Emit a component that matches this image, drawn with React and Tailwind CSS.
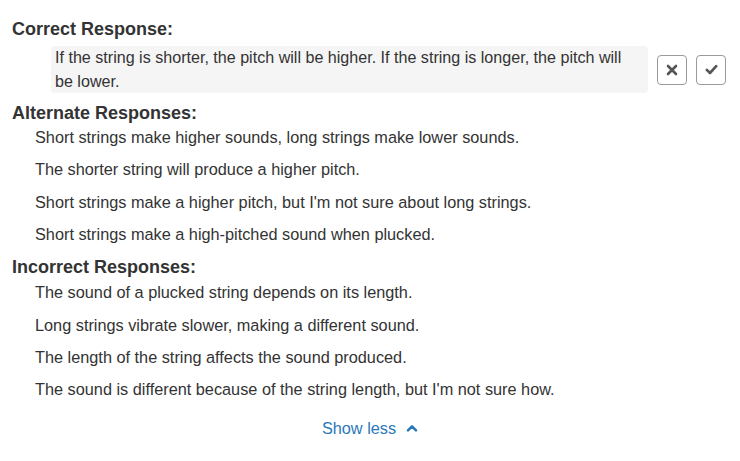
import React from 'react'

const alternates = [
  'Short strings make higher sounds, long strings make lower sounds.',
  'The shorter string will produce a higher pitch.',
  "Short strings make a higher pitch, but I'm not sure about long strings.",
  'Short strings make a high-pitched sound when plucked.',
]

const incorrect = [
  'The sound of a plucked string depends on its length.',
  'Long strings vibrate slower, making a different sound.',
  'The length of the string affects the sound produced.',
  "The sound is different because of the string length, but I'm not sure how.",
]

function Heading({ children }) {
  return <h3 className="text-[18px] font-bold leading-[20px] text-[#333]">{children}</h3>
}

function ResponseList({ items, className = '' }) {
  return (
    <ul className={`pl-[23px] ${className}`}>
      {items.map((t) => (
        <li key={t} className="py-[4px] text-[16.3px] leading-[24.33px] text-[#333]">
          {t}
        </li>
      ))}
    </ul>
  )
}

export default function App() {
  return (
    <div
      className="min-h-[461px] w-[740px] bg-white px-[12px] pt-[19px]"
      style={{ fontFamily: '"Liberation Sans", Arial, sans-serif' }}
    >
      <Heading>Correct Response:</Heading>
      <div className="mt-[7px] flex items-center pl-[39px]">
        <div className="w-[597px] rounded-[4px] bg-[#f5f5f5] pl-[4px] pr-[8px] text-[16.1px] leading-[23.5px] text-[#333]">
          If the string is shorter, the pitch will be higher. If the string is longer, the pitch will be lower.
        </div>
        <div className="ml-[9px] flex gap-[9px]">
          <button className="flex h-[30px] w-[30px] items-center justify-center rounded-[4px] border border-[#9a9a9a] bg-white">
            <svg width="12" height="12" viewBox="0 0 12 12">
              <path d="M2 2 L10 10 M10 2 L2 10" stroke="#555" strokeWidth="2.6" strokeLinecap="round" />
            </svg>
          </button>
          <button className="flex h-[30px] w-[30px] items-center justify-center rounded-[4px] border border-[#9a9a9a] bg-white">
            <svg width="13" height="11" viewBox="0 0 13 11">
              <path d="M1.8 5.8 L5 9 L11.2 2.2" fill="none" stroke="#555" strokeWidth="2.6" strokeLinecap="round" strokeLinejoin="round" />
            </svg>
          </button>
        </div>
      </div>
      <div className="mt-[10px]">
        <Heading>Alternate Responses:</Heading>
      </div>
      <ResponseList items={alternates} className="-mt-[2px]" />
      <div className="mt-[7px]">
        <Heading>Incorrect Responses:</Heading>
      </div>
      <ResponseList items={incorrect} className="-mt-[1px]" />
      <div className="mt-[12px] flex justify-center">
        <button className="flex items-center gap-[10px] text-[16.3px] leading-[20px] text-[#2b78b8]">
          Show less
          <svg width="12" height="8" viewBox="0 0 12 8">
            <path d="M2 6.3 L6 2.3 L10 6.3" fill="none" stroke="#2b78b8" strokeWidth="2.6" strokeLinecap="round" strokeLinejoin="round" />
          </svg>
        </button>
      </div>
    </div>
  )
}
